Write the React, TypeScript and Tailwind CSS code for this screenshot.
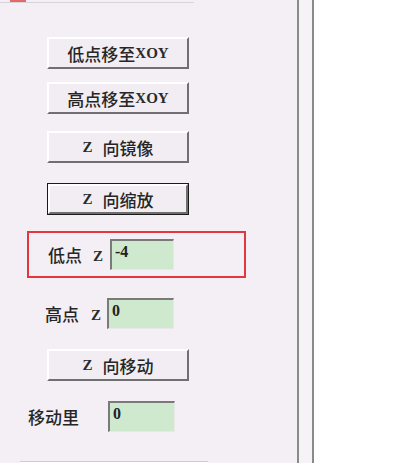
const cjk = { fontFamily: '"Noto Sans CJK SC", sans-serif' };
const latin = { fontFamily: '"Liberation Serif", serif' };

function L({ children, gap }: { children: string; gap?: boolean }) {
  return (
    <span
      style={latin}
      className={"text-[15px] font-bold text-[#2a2a2a] " + (gap ? "mr-[10px]" : "")}
    >
      {children}
    </span>
  );
}

function Btn({ children, isDefault }: { children: React.ReactNode; isDefault?: boolean }) {
  return (
    <div
      className={
        "ml-[47px] w-[142px] h-[32px] flex " +
        (isDefault ? "border border-[#1a1a1a]" : "")
      }
    >
      <div className="flex-1 flex items-center justify-center bg-[#f1edf2] border-t-2 border-l-2 border-t-white border-l-white border-b-2 border-r-2 border-b-[#6f6f6f] border-r-[#6f6f6f] text-[17px] font-medium text-[#262626] leading-none">
        {children}
      </div>
    </div>
  );
}

function Field({ value, width }: { value: string; width: string }) {
  return (
    <div
      style={latin}
      className={
        width +
        " h-[31px] bg-[#cfe9cf] border-t-2 border-l-2 border-t-[#7a7a7a] border-l-[#7a7a7a] border-b border-r border-b-[#e8e8e8] border-r-[#e8e8e8] flex items-start pl-[3px] pt-[3px] text-[16px] font-bold text-[#222] leading-none"
      }
    >
      {value}
    </div>
  );
}

export default function App() {
  return (
    <div className="w-[419px] h-[463px] flex bg-white overflow-hidden" style={cjk}>
      <div className="w-[297px] h-full bg-[#f3eff5] flex flex-col">
        {/* cut-off tab strip on top */}
        <div className="h-[3px] w-[194px] border-b border-[#d8d4da] flex">
          <div className="ml-[10px] w-[16px] h-[2px] bg-[#e26a6a]" />
        </div>

        <div className="mt-[34px]">
          <Btn>
            低点移至<L>XOY</L>
          </Btn>
        </div>
        <div className="mt-[13px]">
          <Btn>
            高点移至<L>XOY</L>
          </Btn>
        </div>
        <div className="mt-[17px]">
          <Btn>
            <L gap>Z</L>向镜像
          </Btn>
        </div>
        <div className="mt-[20px]">
          <Btn isDefault>
            <L gap>Z</L>向缩放
          </Btn>
        </div>

        <div className="mt-[16px] ml-[27px] w-[219px] h-[47px] border-2 border-[#e2383d] flex items-center">
          <span className="ml-[19px] text-[17px] font-medium text-[#262626] leading-none">低点</span>
          <span className="ml-[11px] leading-none">
            <L>Z</L>
          </span>
          <div className="ml-[7px]">
            <Field value="-4" width="w-[64px]" />
          </div>
        </div>

        <div className="mt-[20px] flex items-center">
          <span className="ml-[45px] text-[17px] font-medium text-[#262626] leading-none">高点</span>
          <span className="ml-[12px] leading-none">
            <L>Z</L>
          </span>
          <div className="ml-[6px]">
            <Field value="0" width="w-[67px]" />
          </div>
        </div>

        <div className="mt-[20px]">
          <Btn>
            <L gap>Z</L>向移动
          </Btn>
        </div>

        <div className="mt-[20px] flex items-center">
          <span className="ml-[28px] text-[17px] font-medium text-[#262626] leading-none">移动里</span>
          <div className="ml-[29px]">
            <Field value="0" width="w-[67px]" />
          </div>
        </div>

        <div className="mt-auto ml-[20px] w-[188px] h-[2px] bg-[#ffffff] border-t border-[#cfcbd1]" />
      </div>

      <div className="w-[2px] h-full bg-[#8a8a8a]" />
      <div className="w-[13px] h-full bg-[#f6f3f7]" />
      <div className="w-[2px] h-full bg-[#8a8a8a]" />
      <div className="flex-1 h-full bg-white" />
    </div>
  );
}
